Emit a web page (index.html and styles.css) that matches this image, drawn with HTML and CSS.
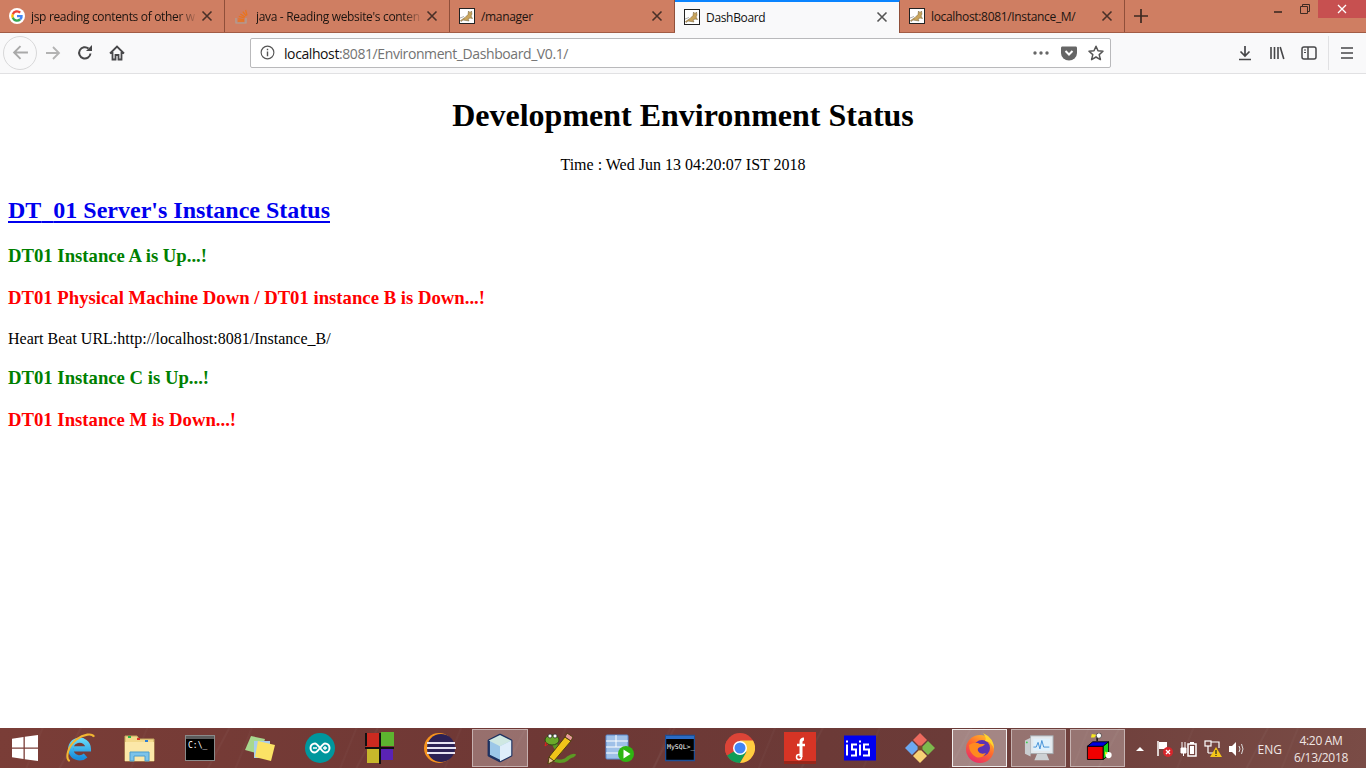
FILE: index.html
```html
<!DOCTYPE html>
<html lang="en">
<head>
<meta charset="utf-8">
<title>DashBoard</title>
<link rel="stylesheet" href="styles.css">
</head>
<body>
<svg class="defs" width="0" height="0" aria-hidden="true">
  <defs>
    <symbol id="cat" viewBox="0 0 16 16">
      <rect x="0.5" y="0.5" width="15" height="15" fill="#fff" stroke="#222"/>
      <path d="M1.500 12.500 6 9.500 9 6.500 9.500 3 11 4.500 12.500 3 13 6 12 8 13.500 10.500 11 10 9 11 10 13 7 12.500 4 12 2 13.500Z" fill="#c9a45c" stroke="#6e5a34" stroke-width=".5"/>
      <path d="M1 10 5 8.500" stroke="#999" stroke-width=".8"/>
    </symbol>
    <symbol id="close" viewBox="0 0 12 12">
      <path d="M1.500 1.500 10.500 10.500M10.500 1.500 1.500 10.500" fill="none" stroke="currentColor" stroke-width="1.600"/>
    </symbol>
    <linearGradient id="fx" x1=".8" y1="0" x2=".2" y2="1">
      <stop offset="0" stop-color="#ffc02c"/>
      <stop offset=".45" stop-color="#ff6a2c"/>
      <stop offset="1" stop-color="#e6286e"/>
    </linearGradient>
    <linearGradient id="ie" x1="0" y1="0" x2="0" y2="1">
      <stop offset="0" stop-color="#62d6f7"/>
      <stop offset="1" stop-color="#1a8fdc"/>
    </linearGradient>
  </defs>
</svg>
<div class="browser">
  <header class="tabs">
    <div class="tab">
      <svg class="favicon" viewBox="0 0 16 16"><circle cx="8" cy="8" r="8" fill="#fff"/><path d="M8 4.600A3.400 3.400 0 0 1 10.300 5.500L12 3.800A5.800 5.800 0 0 0 2.800 5.400L4.800 7A3.400 3.400 0 0 1 8 4.600Z" fill="#ea4335"/><path d="M2.800 5.400A5.800 5.800 0 0 0 2.800 10.600L4.800 9A3.400 3.400 0 0 1 4.800 7Z" fill="#fbbc05"/><path d="M2.800 10.600A5.800 5.800 0 0 0 12 12.200L10.200 10.600A3.400 3.400 0 0 1 4.800 9Z" fill="#34a853"/><path d="M13.700 7H8V9.300H11.200A3 3 0 0 1 10.200 10.600L12 12.200A5.800 5.800 0 0 0 13.700 7Z" fill="#4285f4"/></svg>
      <span class="tab-title fade">jsp reading contents of other w</span>
      <svg class="tab-close"><use href="#close"/></svg>
    </div>
    <div class="tab">
      <svg class="favicon" viewBox="0 0 16 16"><path d="M2 10V15H12V10" fill="none" stroke="#a9a29c" stroke-width="1.200"/><path d="M4 13H10M4.200 10.800 10 11.600M4.800 8.400 10.400 9.800M6.400 6 11 9M8.800 3.600 12.200 8M11.600 2 13 7.400" fill="none" stroke="#e8741f" stroke-width="1.300"/></svg>
      <span class="tab-title fade">java - Reading website's conten</span>
      <svg class="tab-close"><use href="#close"/></svg>
    </div>
    <div class="tab">
      <svg class="favicon"><use href="#cat"/></svg>
      <span class="tab-title">/manager</span>
      <svg class="tab-close"><use href="#close"/></svg>
    </div>
    <div class="tab tab-active">
      <svg class="favicon"><use href="#cat"/></svg>
      <span class="tab-title">DashBoard</span>
      <svg class="tab-close"><use href="#close"/></svg>
    </div>
    <div class="tab">
      <svg class="favicon"><use href="#cat"/></svg>
      <span class="tab-title">localhost:8081/Instance_M/</span>
      <svg class="tab-close"><use href="#close"/></svg>
    </div>
    <button class="new-tab" type="button"><svg viewBox="0 0 14 14"><path d="M7 0V14M0 7H14" stroke="#3d2a22" stroke-width="1.700" fill="none"/></svg></button>
    <div class="win-controls">
      <span class="win-btn"><svg viewBox="0 0 10 10"><path d="M1 8H9" stroke="#3d2a22" stroke-width="1.600"/></svg></span>
      <span class="win-btn"><svg viewBox="0 0 10 10"><path d="M2.500 2.500V.5H9.500V7.500H7.500M.5 2.500H7.500V9.500H.5Z" stroke="#3d2a22" fill="none"/></svg></span>
      <span class="win-btn win-x"><svg viewBox="0 0 10 10"><path d="M1 1 9 9M9 1 1 9" stroke="#fff" stroke-width="1.300"/></svg></span>
    </div>
  </header>
  <nav class="toolbar">
    <span class="back"><svg viewBox="0 0 16 16"><path d="M15 8H2M8 2 2 8 8 14" fill="none" stroke="#a9a9a9" stroke-width="1.800"/></svg></span>
    <span class="tool forward"><svg viewBox="0 0 16 16"><path d="M1 8H14M8 2 14 8 8 14" fill="none" stroke="#b3b3b3" stroke-width="1.800"/></svg></span>
    <span class="tool"><svg viewBox="0 0 16 16"><path d="M13.500 8.500A5.700 5.700 0 1 1 11.500 3.500" fill="none" stroke="#474749" stroke-width="2"/><path d="M9 6H15V0Z" fill="#474749"/></svg></span>
    <span class="tool"><svg viewBox="0 0 16 16"><path d="M1 8.500 8 1.500 15 8.500M3.500 7V14.500H6.500V10H9.500V14.500H12.500V7" fill="none" stroke="#474749" stroke-width="1.800"/></svg></span>
    <div class="urlbar">
      <svg class="info" viewBox="0 0 16 16"><circle cx="8" cy="8" r="6.800" fill="none" stroke="#555" stroke-width="1.200"/><path d="M8 7V12M8 4V5.700" stroke="#555" stroke-width="1.500"/></svg>
      <span class="url"><span class="url-host">localhost</span>:8081/Environment_Dashboard_V0.1/</span>
      <svg class="dots" viewBox="0 0 16 4"><circle cx="2" cy="2" r="1.700"/><circle cx="8" cy="2" r="1.700"/><circle cx="14" cy="2" r="1.700"/></svg>
      <svg class="pocket" viewBox="0 0 16 16"><path d="M1 1.500H15Q16 1.500 16 3V8A8 7.500 0 0 1 0 8V3Q0 1.500 1 1.500Z" fill="#666"/><path d="M4.500 6 8 9.500 11.500 6" fill="none" stroke="#fff" stroke-width="2"/></svg>
      <svg class="star" viewBox="0 0 16 16"><path d="M8 1.200 10 5.800 15 6.300 11.200 9.600 12.400 14.600 8 12 3.600 14.600 4.800 9.600 1 6.300 6 5.800Z" fill="none" stroke="#555" stroke-width="1.500" stroke-linejoin="round"/></svg>
    </div>
    <div class="tools-right">
      <span class="tool"><svg viewBox="0 0 16 16"><path d="M8 1V11M3.500 6.500 8 11 12.500 6.500M2 14.500H14" fill="none" stroke="#474749" stroke-width="1.700"/></svg></span>
      <span class="tool"><svg viewBox="0 0 16 16"><path d="M2 2V14M5.500 2V14M9 2V14M11.200 2 14.800 14" fill="none" stroke="#474749" stroke-width="1.600"/></svg></span>
      <span class="tool"><svg viewBox="0 0 16 16"><rect x="1" y="2" width="14" height="12" rx="2" fill="none" stroke="#474749" stroke-width="1.500"/><path d="M7 2V14" stroke="#474749" stroke-width="1.500"/><path d="M3 5H5M3 7.500H5" stroke="#474749"/></svg></span>
      <span class="tool-sep"></span>
      <span class="tool"><svg viewBox="0 0 16 16"><path d="M2 3H14M2 8H14M2 13H14" stroke="#474749" stroke-width="1.700"/></svg></span>
    </div>
  </nav>
  <main class="page">
    <h1>Development Environment Status</h1>
    <p class="time">Time : Wed Jun 13 04:20:07 IST 2018</p>
    <h2><a href="#">DT<span class="merged">_</span>01 Server's Instance Status</a></h2>
    <h3 class="up">DT01 Instance A is Up...!</h3>
    <h3 class="down">DT01 Physical Machine Down / DT01 instance B is Down...!</h3>
    <p class="beat">Heart Beat URL:http://localhost:8081/Instance_B/</p>
    <h3 class="up">DT01 Instance C is Up...!</h3>
    <h3 class="down">DT01 Instance M is Down...!</h3>
  </main>
  <footer class="taskbar">
    <span class="task start"><svg viewBox="0 0 26 26"><path d="M0 3.700 11.500 2V12.400H0ZM12.800 1.800 26 0V12.400H12.800ZM0 13.700H11.500V24L0 22.300ZM12.800 13.700H26V26L12.800 24.200Z" fill="#fff"/></svg></span>
    <span class="task"><svg viewBox="0 0 32 32"><path d="M9 17H25A9.500 9.500 0 1 0 22 24" fill="none" stroke="url(#ie)" stroke-width="5.500"/><path d="M5 30C0 27 3 14 12 7 20 1 29 0 31 4" fill="none" stroke="#f2b632" stroke-width="2.200"/></svg></span>
    <span class="task big"><svg viewBox="0 0 32 30"><path d="M1 3H13L15 6H30V28H1Z" fill="#f3d98b" stroke="#c5a860"/><rect x="4" y="3" width="3" height="2" fill="#2ab34a"/><rect x="13" y="5" width="3" height="2" fill="#d9352a"/><rect x="21" y="7" width="3" height="2" fill="#2d7fd3"/><path d="M1 9H30V28H1Z" fill="#fbe7a8"/><path d="M6 28V19H25V28H21V23H10V28Z" fill="#7cc3ea" stroke="#4b9ccc"/></svg></span>
    <span class="task"><svg viewBox="0 0 30 26"><rect x=".5" y=".5" width="29" height="25" fill="#000" stroke="#8a8a8a"/><rect x="1" y="1" width="28" height="3" fill="#5b5b5b"/><text class="cmd-text" x="3" y="13">C:\_</text></svg></span>
    <span class="task big"><svg viewBox="0 0 32 30"><path d="M7 3 21 6 16 21 1 17Z" fill="#a8d88e"/><path d="M10 8H26V25H10Z" fill="#a7cdee"/><path d="M14 8 31 12 27 28 11 24Z" fill="#fbe365"/></svg></span>
    <span class="task"><svg viewBox="0 0 30 30"><circle cx="15" cy="15" r="15" fill="#00979d"/><path d="M10 10.500A4.500 4.500 0 1 0 10 19.500C13 19.500 17 10.500 20 10.500A4.500 4.500 0 1 1 20 19.500C17 19.500 13 10.500 10 10.500Z" fill="none" stroke="#fff" stroke-width="2"/><path d="M8 15H12M18 15H22M20 13V17" stroke="#fff" stroke-width="1.300"/></svg></span>
    <span class="task big"><svg viewBox="0 0 30 32"><rect x="1" y="1" width="14" height="15" fill="#cb2a20"/><rect x="16" y="0" width="13" height="14" fill="#5db52f"/><rect x="2" y="17" width="13" height="14" fill="#c7b72b"/><rect x="16" y="15" width="12" height="13" fill="#5a23b5"/><path d="M0 1H2V14H0ZM14 1H16V32H14ZM0 15H29V17H0Z" fill="#111"/></svg></span>
    <span class="task big"><svg viewBox="0 0 32 32"><circle cx="15" cy="16" r="15" fill="#f7941e"/><circle cx="17" cy="16" r="14" fill="#2c2255"/><path d="M3 11H31M3 16H32M3 21H31" stroke="#e7e4f2" stroke-width="2"/></svg></span>
    <span class="task pinned"><svg viewBox="0 0 30 32"><path d="M15 2 27 8V24L15 30 3 24V8Z" fill="#9cc7e8" stroke="#1d3160" stroke-width="2.500" stroke-linejoin="round"/><path d="M15 2 27 8 15 14 3 8Z" fill="#cfe8e2"/><path d="M15 14V30L27 24V8Z" fill="#dfeefa"/></svg></span>
    <span class="task big"><svg viewBox="0 0 32 32"><path d="M9 27C14 31 22 29 24 26 27 24 30 23 31 24" fill="none" stroke="#5c9a24" stroke-width="3.500"/><path d="M10 10C11 15 14 18 17 21" fill="none" stroke="#5c9a24" stroke-width="5"/><ellipse cx="8" cy="8" rx="7" ry="5" fill="#6aa82a" stroke="#2e4a12"/><circle cx="6" cy="4" r="2" fill="#fff" stroke="#222" stroke-width=".7"/><circle cx="11" cy="4" r="2" fill="#fff" stroke="#222" stroke-width=".7"/><path d="M2 10 1 14 4 12" fill="none" stroke="#e02020"/><path d="M21 5 27 9 10 29 4 32 5 25Z" fill="#f0c419" stroke="#4f3f10"/><path d="M21 5 23 1 29 5 27 9Z" fill="#e79a9a" stroke="#4f3f10"/><path d="M5 25 10 29 4 32Z" fill="#e9c99a" stroke="#4f3f10"/></svg></span>
    <span class="task"><svg viewBox="0 0 30 28"><rect x="1" y="1" width="22" height="24" rx="1" fill="#9fc0e8" stroke="#5a8bd0"/><path d="M1 7H23M1 13H23M1 19H23M11 1V13" stroke="#fff"/><circle cx="21" cy="20" r="8" fill="#2fb512"/><path d="M18.500 15.500 25.500 20 18.500 24.500Z" fill="#fff"/></svg></span>
    <span class="task"><svg viewBox="0 0 30 26"><rect x=".5" y=".5" width="29" height="25" fill="#000" stroke="#1d4f96" stroke-width="1.500"/><rect x="1" y="1" width="28" height="3" fill="#2b6cc4"/><text class="mysql-text" x="2" y="14">MySQL&gt;_</text></svg></span>
    <span class="task"><svg viewBox="0 0 30 30"><circle cx="15" cy="15" r="15" fill="#db4437"/><path d="M2 22.500A15 15 0 0 0 15 30L21.500 19 15 15Z" fill="#0f9d58"/><path d="M15 30A15 15 0 0 0 28 7.500H15L21.500 19Z" fill="#ffcd40"/><path d="M2 7.500 2 22.500A15 15 0 0 1 2 7.500Z" fill="#db4437"/><circle cx="15" cy="15" r="7" fill="#fff"/><circle cx="15" cy="15" r="5.500" fill="#4285f4"/></svg></span>
    <span class="task big"><svg viewBox="0 0 32 32"><rect width="32" height="32" fill="#d63425"/><rect y="29" width="32" height="3" fill="#98261a"/><path d="M17 25V10Q17 7 20 7" fill="none" stroke="#fff" stroke-width="3"/><path d="M13 13H21" stroke="#fff" stroke-width="2.500"/><circle cx="15" cy="25" r="2.500" fill="none" stroke="#fff" stroke-width="1.500"/></svg></span>
    <span class="task big"><svg viewBox="0 0 32 25"><rect width="32" height="25" fill="#0000f0"/><path d="M3 5V7M3 9V20M7 20H12V14H8V9H13M16 5V7M16 9V20M19 20H25V14H20V9H25" fill="none" stroke="#fff" stroke-width="2"/></svg></span>
    <span class="task big"><svg viewBox="0 0 32 32"><path d="M16 1 23 8 16 15 9 8Z" fill="#ed6a5e"/><path d="M1 16 8 9 15 16 8 23Z" fill="#6ca8f0"/><path d="M24 9 31 16 24 23 17 16Z" fill="#7db94d"/><path d="M16 17 23 24 16 31 9 24Z" fill="#f7d275"/><circle cx="16" cy="16" r="2.500" fill="#7a4a2a"/></svg></span>
    <span class="task pinned narrow bright"><svg viewBox="0 0 30 30"><circle cx="15" cy="16" r="14" fill="url(#fx)"/><circle cx="17" cy="15" r="8" fill="#5b32b4"/><path d="M4 12Q10 8 15 11L20 11Q18 14 15 14 12 15 13 18 15 22 21 20 17 26 11 24 4 20 4 12Z" fill="#ff8a1f"/><path d="M18 0Q29 5 29 16 26 8 20 8 22 5 18 0Z" fill="#ffd52e"/></svg></span>
    <span class="task pinned narrow"><svg viewBox="0 0 32 30"><rect x="7" y="2" width="24" height="19" fill="#e3e8ec" stroke="#a4abb0"/><rect x="10" y="5" width="18" height="13" fill="#dff0fb"/><path d="M10 14H13L15 9 17 16 19 7 21 14H27" fill="none" stroke="#3f8ed6"/><path d="M1 7 7 4V24L1 21Z" fill="#c9cdd0"/><circle cx="3" cy="9" r="1" fill="#3fcf4f"/><path d="M11 28H27L24 21H14Z" fill="#cdd1d4"/></svg></span>
    <span class="task pinned narrow"><svg viewBox="0 0 32 34"><path d="M4 15V30H22V15Z" fill="#f00000" stroke="#000"/><path d="M4 15 10 10H28L22 15Z" fill="#0000e0" stroke="#000"/><path d="M22 15 28 10V25L22 30Z" fill="#18d818" stroke="#000"/><path d="M15 9V3" stroke="#000" stroke-width="1.500"/><circle cx="17" cy="3" r="3" fill="#fff" stroke="#000" stroke-width=".6"/><path d="M9 1 14 2 12 5 8 5Z" fill="#f7e820"/><circle cx="28" cy="25" r="3.500" fill="#fff"/><path d="M24 21 27 23 24 25Z" fill="#f7e820"/></svg></span>
    <div class="tray">
      <svg class="tray-up" viewBox="0 0 8 4"><path d="M0 4 4 0 8 4Z" fill="#fff"/></svg>
      <svg class="tray-icon" viewBox="0 0 18 18"><path d="M2 1V16" stroke="#fff" stroke-width="1.500"/><path d="M3 2H11V9H3Z" fill="#fff"/><circle cx="12" cy="12" r="5" fill="#d8262c"/><path d="M10 10 14 14M14 10 10 14" stroke="#fff" stroke-width="1.300"/></svg>
      <svg class="tray-icon" viewBox="0 0 18 18"><path d="M1 8H6V13H1ZM2 8V2M5 8V2M3.500 13V16" stroke="#fff" fill="#fff"/><rect x="8" y="4" width="8" height="12" fill="none" stroke="#fff" stroke-width="1.500"/><rect x="10" y="2" width="4" height="2" fill="#fff"/><rect x="10" y="6" width="4" height="8" fill="#fff"/></svg>
      <svg class="tray-icon" viewBox="0 0 18 18"><rect x="1" y="1" width="6" height="5" fill="none" stroke="#fff" stroke-width="1.200"/><path d="M4 6V13M4 13H9M7 2H15V8" fill="none" stroke="#fff" stroke-width="1.200"/><path d="M12 7 18 17H6Z" fill="#f5c518"/><path d="M12 10V14M12 15V16" stroke="#222" stroke-width="1.200"/></svg>
      <svg class="tray-icon" viewBox="0 0 18 18"><path d="M1 6H4L8 2V16L4 12H1Z" fill="#fff"/><path d="M11 6Q13 9 11 12M13.500 4Q16.500 9 13.500 14" fill="none" stroke="#dcdcdc"/></svg>
      <span class="lang">ENG</span>
      <div class="clock"><span>4:20 AM</span><span>6/13/2018</span></div>
    </div>
  </footer>
</div>
</body>
</html>
```
FILE: styles.css
```css
* { box-sizing: border-box; }
html, body { margin: 0; height: 100%; overflow: hidden; }
body { background: #fff; }
.defs { display: block; height: 0; }
.browser { display: flex; flex-direction: column; width: 1366px; height: 768px; }

.tabs {
  display: flex; flex: 0 0 33px; height: 33px;
  background: #cf7e62; border-bottom: 1px solid #a25c45;
  font: 12px "Open Sans", "Noto Sans", sans-serif; color: #1c1410;
}
.tab {
  display: flex; align-items: center; flex: 0 0 225px; width: 225px; height: 32px;
  padding: 0 11px 0 9px; border-right: 1px solid #8f4f3a;
}
.favicon { flex: none; width: 16px; height: 16px; margin-right: 6px; }
.tab-title { flex: 1; padding-top: 1px; white-space: nowrap; overflow: hidden; font-size: 12px; letter-spacing: -.33px; }
.fade { -webkit-mask-image: linear-gradient(90deg, #000 88%, transparent); mask-image: linear-gradient(90deg, #000 88%, transparent); }
.tab-close { flex: none; width: 12px; height: 12px; margin-left: 3px; color: #4a3028; }
.tab-active {
  height: 33px; background: #f9f9fa; border-top: 2px solid #0a84ff; color: #111;
  border-right: 1px solid #8f4f3a; margin-bottom: -1px; padding-bottom: 2px;
}
.tab-active .tab-close { color: #555; }
.new-tab {
  display: flex; align-items: center; justify-content: center;
  width: 32px; height: 32px; padding: 0; border: 0; background: none;
}
.new-tab svg { width: 14px; height: 14px; }
.win-controls { display: flex; margin-left: auto; height: 18px; }
.win-btn { display: flex; align-items: center; justify-content: center; width: 27px; height: 18px; }
.win-btn svg { width: 10px; height: 10px; }
.win-x { width: 48px; background: #c75050; }

.toolbar {
  display: flex; align-items: center; flex: 0 0 41px; height: 41px;
  padding: 0 3px 1px 3px; background: #f9f9fa; border-bottom: 1px solid #e1e1e3;
}
.back {
  display: flex; align-items: center; justify-content: center;
  width: 34px; height: 34px; border: 1px solid #d8d8d9; border-radius: 50%;
}
.back svg { width: 17px; height: 17px; }
.tool { display: flex; align-items: center; justify-content: center; width: 32px; height: 32px; }
.tool svg { width: 16px; height: 16px; }
.urlbar {
  display: flex; align-items: center; width: 861px; height: 30px; margin-left: 117px;
  padding: 0 6px 0 9px; background: #fff;
  border: 1px solid #b9b9bb; border-radius: 2px;
  font: 14px "Open Sans", "Noto Sans", sans-serif; color: #737373;
}
.info { flex: none; width: 15px; height: 15px; margin-right: 9px; }
.url { flex: 1; padding-top: 2px; white-space: nowrap; letter-spacing: -.41px; }
.url-host { color: #111; }
.dots { flex: none; width: 16px; height: 4px; fill: #666; margin-right: 12px; }
.pocket { flex: none; width: 16px; height: 16px; margin-right: 11px; }
.star { flex: none; width: 16px; height: 16px; }
.tools-right { display: flex; align-items: center; margin-left: auto; }
.tool-sep { width: 1px; height: 34px; background: #e1e1e3; margin: 0 2px 0 3px; }

.page { flex: 1; padding: 0 8px; overflow: hidden; font-family: "Liberation Serif", "Times New Roman", serif; color: #000; }
.page h1 { margin: 23px 0 20px; font-size: 32px; text-align: center; }
.time { margin: 0 0 23px; padding-top: 2px; text-align: center; font-size: 16px; }
.page h2 { margin: 0 0 21px; font-size: 24px; }
.page h2 a { color: #00e; text-decoration-thickness: 2px; text-underline-offset: 3px; }
.merged { color: transparent; }
.page h3 { margin: 20px 0; font-size: 18.720px; }
.up { color: #008000; }
.down { color: #f00; }
.beat { margin: 21px 0 19px; font-size: 16px; }
.page .beat + h3 { margin-top: 19px; }

.taskbar {
  display: flex; align-items: stretch; flex: 0 0 40px; height: 40px;
  background:
    repeating-linear-gradient(118deg, transparent 0 70px, rgba(255,255,255,.03) 71px 72px, transparent 73px 131px),
    repeating-linear-gradient(112deg, transparent 0 38px, rgba(255,255,255,.025) 39px 40px, transparent 41px 97px),
    linear-gradient(100deg, #7a3d37 0%, #6e3835 40%, #6b3b38 70%, #7a4c46 100%);
}
.task { display: flex; align-items: center; justify-content: center; flex: 0 0 60px; width: 60px; }
.task svg { width: 30px; height: 30px; }
.big svg { width: 32px; height: 32px; }
.start { flex-basis: 50px; width: 50px; }
.start svg { width: 26px; height: 26px; }
.pinned { margin: 1px 2px; flex-basis: 56px; width: 56px; background: rgba(255,255,255,.28); border: 1px solid rgba(255,255,255,.45); }
.narrow { flex-basis: 55px; width: 55px; }
.bright { background: rgba(255,255,255,.38); border-color: rgba(255,255,255,.85); }
.cmd-text { font: 8px "DejaVu Sans Mono", monospace; fill: #fff; }
.mysql-text { font: 6.500px "DejaVu Sans Mono", monospace; fill: #fff; }
.tray { display: flex; align-items: center; margin-left: auto; padding-top: 2px; color: #f0e6e3; font: 12px "Open Sans", "Noto Sans", sans-serif; }
.tray-up { width: 8px; height: 4px; margin-right: 12px; }
.tray-icon { width: 18px; height: 18px; margin-right: 6px; }
.lang { margin: 0 5px 0 6px; }
.clock { display: flex; flex-direction: column; align-items: center; width: 68px; margin-right: 11px; line-height: 17px; letter-spacing: -.3px; }
```
